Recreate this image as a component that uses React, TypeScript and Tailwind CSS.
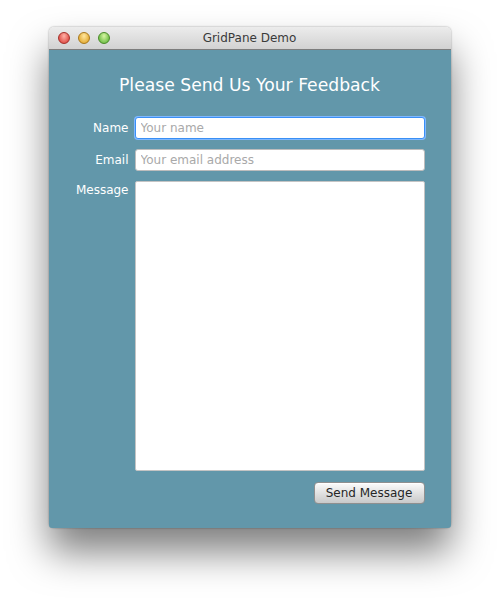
const font = { fontFamily: '"DejaVu Sans", "Liberation Sans", sans-serif' };

function TrafficLight({ from, to, ring }: { from: string; to: string; ring: string }) {
  return (
    <span
      className={`block h-[12px] w-[12px] rounded-full border ${ring} bg-radial-[at_50%_30%] ${from} ${to}`}
    />
  );
}

export default function App() {
  return (
    <div className="min-h-[599px] w-[499px] bg-white pt-[27px]" style={font}>
      <div className="mx-auto flex w-[402px] flex-col rounded-[5px] shadow-[0_24px_38px_rgba(0,0,0,0.5),0_0_2px_rgba(0,0,0,0.4)]">
        {/* Title bar */}
        <div className="relative flex h-[23px] items-center justify-center rounded-t-[5px] border-b border-[#7d7d7d] bg-gradient-to-b from-[#ececec] to-[#d2d2d2]">
          <div className="absolute left-[9px] top-[5px] flex gap-[8px]">
            <TrafficLight from="from-[#ffb3a8]" to="to-[#d6302a]" ring="border-[#a4302a]" />
            <TrafficLight from="from-[#ffe7a0]" to="to-[#dc9a14]" ring="border-[#a8781c]" />
            <TrafficLight from="from-[#d8f5a4]" to="to-[#4fae2a]" ring="border-[#4a8a28]" />
          </div>
          <span className="text-[12px] leading-none text-[#3a3a3a]">GridPane Demo</span>
        </div>

        {/* Body */}
        <div className="flex flex-col items-center rounded-b-[3px] bg-[#6297aa] pb-[24px] pt-[25px]">
          <h1 className="flex h-[22px] items-center text-[17.2px] leading-none text-white">
            Please Send Us Your Feedback
          </h1>

          <div className="mt-[20px] grid grid-cols-[54px_290px] gap-x-[6px] gap-y-[10px]">
            <label className="flex h-[22px] items-center justify-end text-[12px] text-white">Name</label>
            <input
              placeholder="Your name"
              className="h-[22px] rounded-[3px] border border-[#3a8ff5] bg-white px-[5px] text-[12px] text-[#222] shadow-[0_0_0_1px_#7fb8ff] outline-none placeholder:text-[#a9a9a9]"
              style={font}
            />

            <label className="flex h-[22px] items-center justify-end text-[12px] text-white">Email</label>
            <input
              placeholder="Your email address"
              className="h-[22px] rounded-[3px] border border-[#bdbdbd] bg-white px-[5px] text-[12px] text-[#222] outline-none placeholder:text-[#a9a9a9]"
              style={font}
            />

            <label className="flex justify-end pt-[2px] text-[12px] leading-[15px] text-white">Message</label>
            <textarea
              className="h-[290px] resize-none rounded-[2px] border border-[#c4c4c4] bg-white p-[4px] text-[12px] outline-none"
              style={font}
            />

            <div />
            <div className="flex justify-end pt-[1px]">
              <button
                className="flex h-[22px] w-[111px] items-center justify-center rounded-[4px] border border-[#8f8f8f] bg-gradient-to-b from-[#fbfbfb] to-[#c9c9c9] text-[12px] text-[#262626] shadow-[inset_0_1px_0_#ffffff]"
                style={font}
              >
                Send Message
              </button>
            </div>
          </div>
        </div>
      </div>
    </div>
  );
}
